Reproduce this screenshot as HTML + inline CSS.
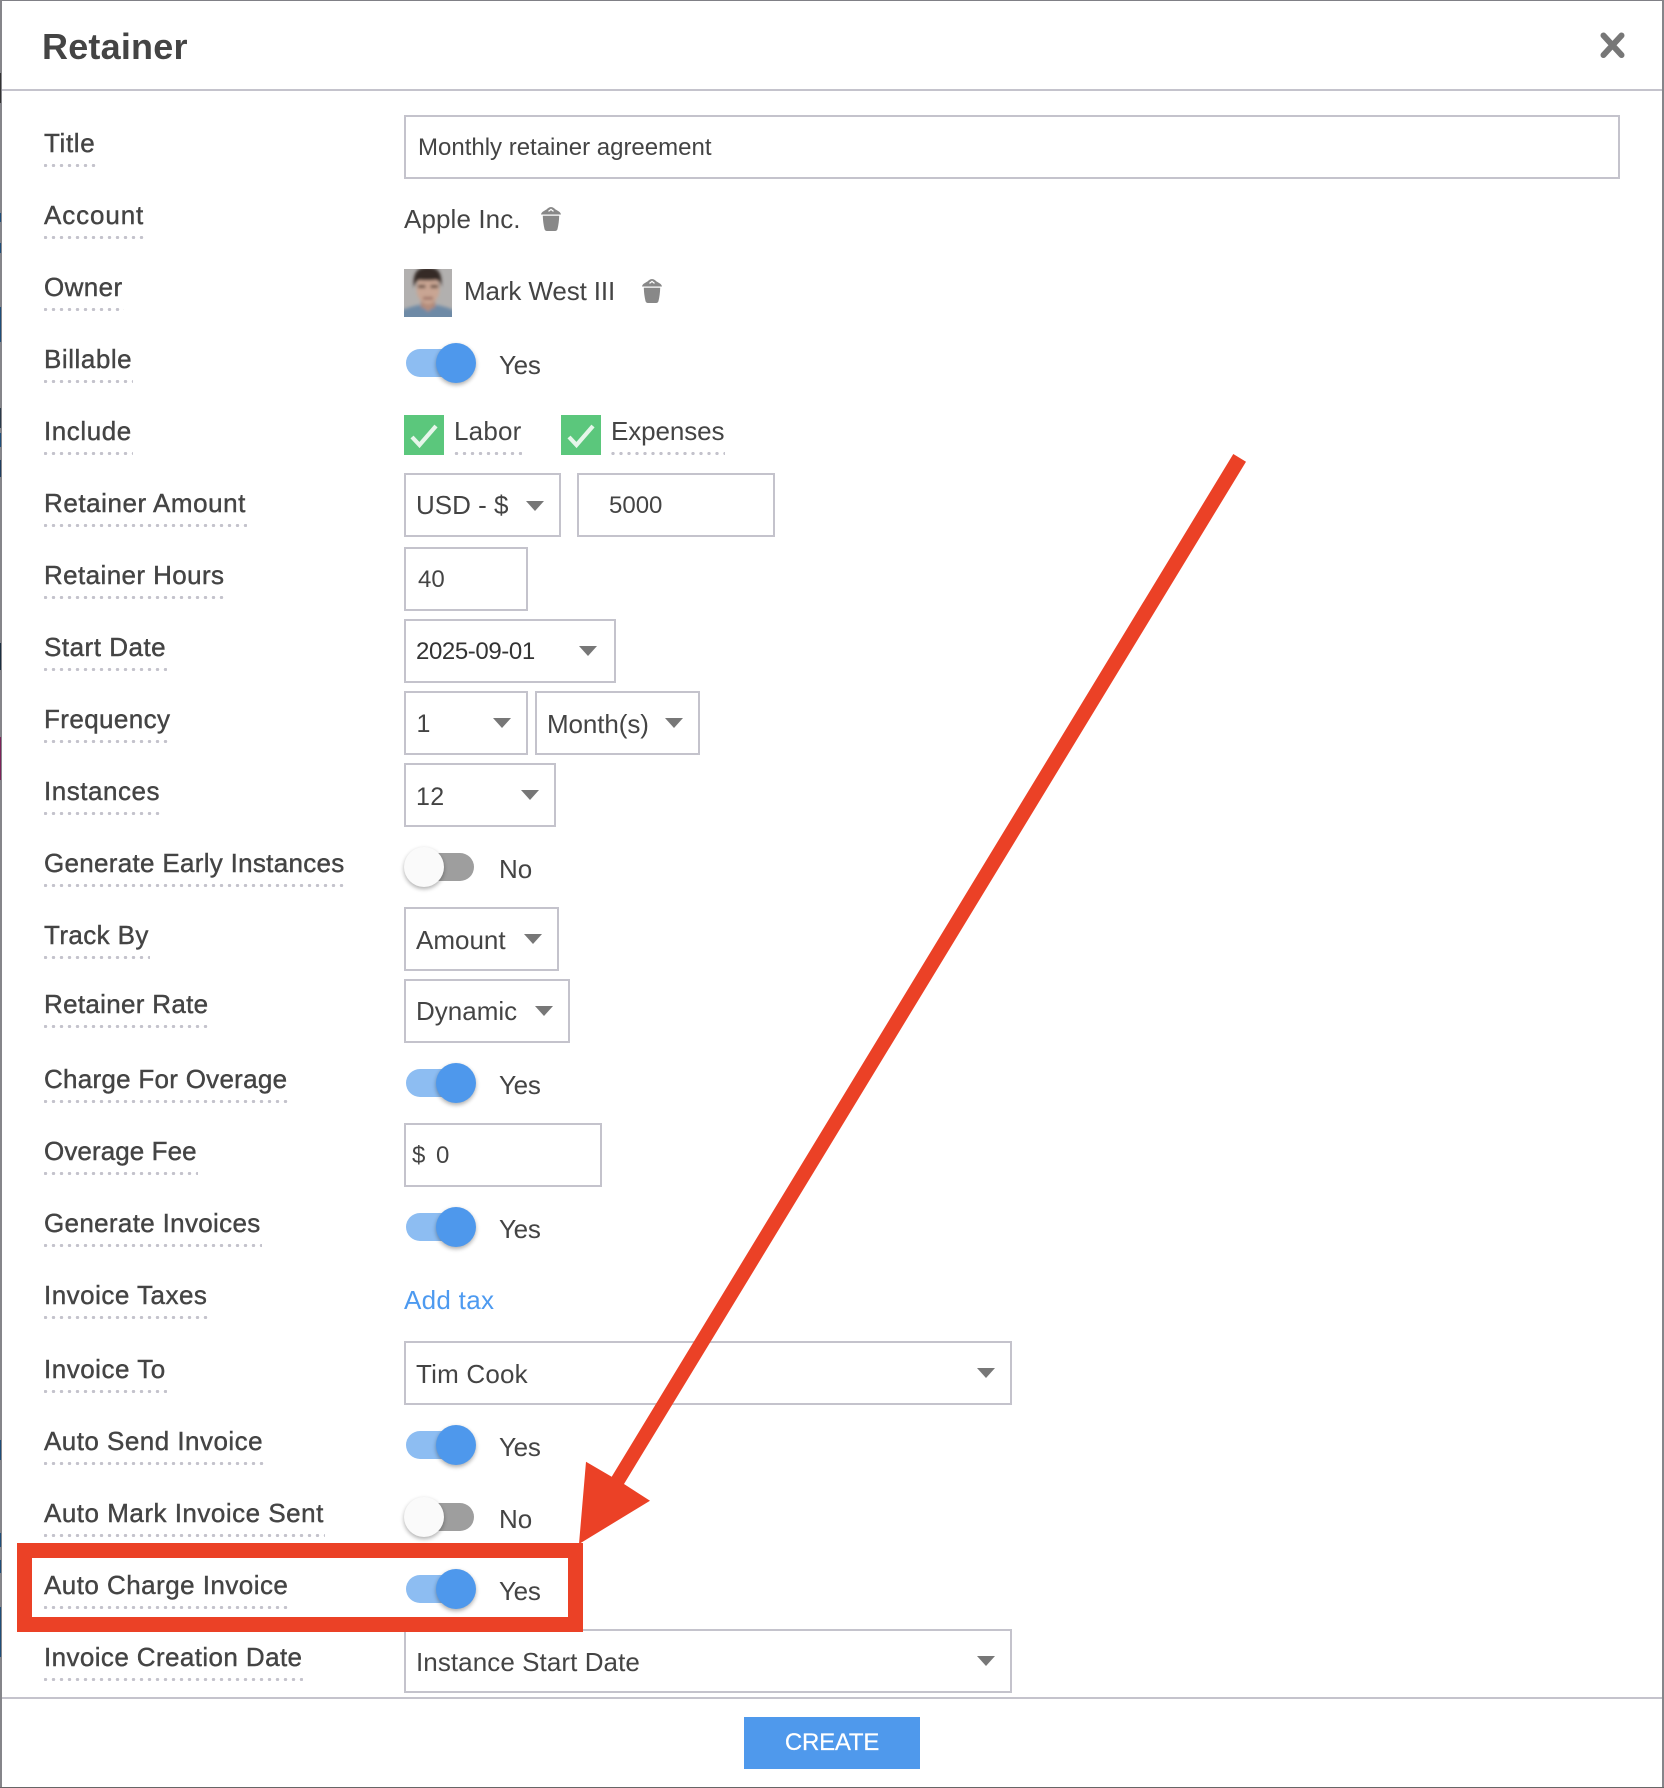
<!DOCTYPE html>
<html lang="en">
<head>
<meta charset="utf-8">
<title>Retainer</title>
<style>
html,body{margin:0;padding:0;background:#fff}
body{position:relative;width:1664px;height:1788px;overflow:hidden;font-family:"Liberation Sans",Arial,sans-serif;color:#444}
.a{position:absolute}
.t{position:absolute;font-size:26px;line-height:30px;height:30px;white-space:nowrap}
.s{font-size:24px}
.l{position:absolute;left:44px;padding-right:1px;font-size:26px;line-height:30px;height:39px;white-space:nowrap;-webkit-text-stroke:.4px #444;
background:radial-gradient(circle at 4px 1.5px,#c4c3cc 1.5px,rgba(196,195,204,0) 1.9px) -2.5px 100%/8px 3px repeat-x}
.d{position:absolute;font-size:26px;line-height:30px;height:39px;white-space:nowrap;
background:radial-gradient(circle at 4px 1.5px,#c4c3cc 1.5px,rgba(196,195,204,0) 1.9px) -2px 100%/8px 3px repeat-x}
.b{position:absolute;box-sizing:border-box;height:64px;border:2px solid #c4c3cc;background:#fff}
.c{position:absolute;width:0;height:0;border-left:9.5px solid transparent;border-right:9.5px solid transparent;border-top:10px solid #777}
.tr{position:absolute;height:28px;border-radius:14px}
.k{position:absolute;width:40px;height:40px;border-radius:50%;box-shadow:0 2px 4px rgba(0,0,0,.32)}
.on{background:#8dbdf2;left:406px;width:60px}
.onk{background:#4e98ec;left:436px}
.off{background:#9e9e9e;left:414px;width:60px}
.offk{background:#fafafa;left:404px}
</style>
</head>
<body>
<!-- frame -->
<div class="a" style="left:0;top:0;width:1664px;height:1px;background:#808086"></div>
<div class="a" style="left:0;top:0;width:2px;height:1788px;background:#85858a"></div>
<div class="a" style="left:1662px;top:0;width:2px;height:1788px;background:#85858a"></div>
<div class="a" style="left:0;top:1787px;width:1664px;height:1px;background:#666"></div>
<div class="a" style="left:0;top:73px;width:1px;height:30px;background:#333"></div>
<div class="a" style="left:0;top:213px;width:1px;height:9px;background:#1f4e79"></div>
<div class="a" style="left:0;top:243px;width:1px;height:10px;background:#1f4e79"></div>
<div class="a" style="left:0;top:307px;width:1px;height:35px;background:#1f4e79"></div>
<div class="a" style="left:0;top:408px;width:1px;height:20px;background:#2a3a4a"></div>
<div class="a" style="left:0;top:433px;width:1px;height:14px;background:#1f4e79"></div>
<div class="a" style="left:0;top:460px;width:1px;height:17px;background:#1f3e60"></div>
<div class="a" style="left:0;top:643px;width:1px;height:27px;background:#1c2f40"></div>
<div class="a" style="left:0;top:737px;width:1px;height:43px;background:#7b2459"></div>
<div class="a" style="left:0;top:1440px;width:1px;height:20px;background:#1f4e79"></div>
<div class="a" style="left:0;top:1533px;width:1px;height:14px;background:#1f4e79"></div>
<div class="a" style="left:0;top:1560px;width:1px;height:13px;background:#1f4e79"></div>
<div class="a" style="left:0;top:1607px;width:1px;height:50px;background:#1f4e79"></div>

<!-- header -->
<div class="t" style="left:42px;top:27px;font-size:36px;line-height:40px;height:40px;font-weight:bold;letter-spacing:.2px">Retainer</div>
<svg class="a" style="left:1598px;top:30px" width="30" height="30" viewBox="0 0 30 30"><path d="M5.5 5.5L23.5 25M23.5 5.5L5.5 25" stroke="#777" stroke-width="6" stroke-linecap="round" fill="none"/></svg>
<div class="a" style="left:2px;top:89px;width:1660px;height:2px;background:#c4c3cc"></div>

<!-- labels -->
<div class="l" style="top:127.5px;letter-spacing:.63px">Title</div>
<div class="l" style="top:199.5px;letter-spacing:.89px">Account</div>
<div class="l" style="top:271.5px;letter-spacing:.4px">Owner</div>
<div class="l" style="top:343.5px;letter-spacing:.54px">Billable</div>
<div class="l" style="top:415.5px;letter-spacing:.56px">Include</div>
<div class="l" style="top:487.5px;letter-spacing:.55px">Retainer Amount</div>
<div class="l" style="top:559.5px;letter-spacing:.4px">Retainer Hours</div>
<div class="l" style="top:631.5px;letter-spacing:.51px">Start Date</div>
<div class="l" style="top:703.5px;letter-spacing:.4px">Frequency</div>
<div class="l" style="top:775.5px;letter-spacing:.53px">Instances</div>
<div class="l" style="top:847.5px;letter-spacing:.3px">Generate Early Instances</div>
<div class="l" style="top:919.5px;letter-spacing:.4px">Track By</div>
<div class="l" style="top:988.5px;letter-spacing:.31px">Retainer Rate</div>
<div class="l" style="top:1063.5px;letter-spacing:.27px">Charge For Overage</div>
<div class="l" style="top:1135.5px;letter-spacing:.09px">Overage Fee</div>
<div class="l" style="top:1207.5px;letter-spacing:.33px">Generate Invoices</div>
<div class="l" style="top:1279.5px;letter-spacing:.49px">Invoice Taxes</div>
<div class="l" style="top:1353.5px;letter-spacing:.51px">Invoice To</div>
<div class="l" style="top:1425.5px;letter-spacing:.47px">Auto Send Invoice</div>
<div class="l" style="top:1497.5px;letter-spacing:.5px">Auto Mark Invoice Sent</div>
<div class="l" style="top:1569.5px;letter-spacing:.46px">Auto Charge Invoice</div>
<div class="l" style="top:1641.5px;letter-spacing:.4px">Invoice Creation Date</div>

<!-- boxes -->
<div class="b" style="left:404px;top:115px;width:1216px"></div>
<div class="t s" style="left:418px;top:133px">Monthly retainer agreement</div>

<div class="t" style="left:404px;top:204px;letter-spacing:.1px">Apple Inc.</div>
<svg class="a" style="left:541px;top:206px" width="20" height="25" viewBox="0 0 20 25"><path d="M0 8.5C0.5 5 5 4.5 6.5 2.5Q10 -0.5 13.5 2.5C15 4.5 19.5 5 20 8.5Z" fill="#888"/><path d="M7.5 5.4L10 3.4L12.5 5.4" stroke="#fff" stroke-width="1.2" fill="none"/><path d="M1.8 9.8H18.2Q18 17 16.5 23Q16 25 14 25H6Q4 25 3.5 23Q2 17 1.8 9.8Z" fill="#888"/></svg>

<svg class="a" style="left:404px;top:269px" width="48" height="48" viewBox="0 0 48 48">
<defs><filter id="bl" x="-10%" y="-10%" width="120%" height="120%"><feGaussianBlur stdDeviation="1.5"/></filter><clipPath id="cp"><rect width="48" height="48"/></clipPath></defs>
<g clip-path="url(#cp)"><rect width="48" height="48" fill="#b2b0af"/>
<g filter="url(#bl)">
<path d="M-6 56V43Q4 38 15 36L33 36Q44 38 54 43V56Z" fill="#6e8aa6"/>
<rect x="17" y="28" width="14" height="11" fill="#a98272"/>
<path d="M17 36L24 43L31 36L28 33H20Z" fill="#b58d7b"/>
<ellipse cx="24" cy="20" rx="11.5" ry="15" fill="#c9a593"/>
<path d="M10 19Q7 -2 24 -2Q40 -2 37 19Q36 11 32 11Q22 12 15 11Q12 12 10 19Z" fill="#362a25"/>
<rect x="14" y="16" width="7.5" height="3" fill="#5a4438"/><rect x="26.5" y="16" width="7.5" height="3" fill="#5a4438"/>
<rect x="19" y="28" width="10" height="2.5" fill="#966a5e"/>
</g></g></svg>
<div class="t" style="left:464px;top:276px;letter-spacing:-.12px">Mark West III</div>
<svg class="a" style="left:642px;top:278px" width="20" height="25" viewBox="0 0 20 25"><path d="M0 8.5C0.5 5 5 4.5 6.5 2.5Q10 -0.5 13.5 2.5C15 4.5 19.5 5 20 8.5Z" fill="#888"/><path d="M7.5 5.4L10 3.4L12.5 5.4" stroke="#fff" stroke-width="1.2" fill="none"/><path d="M1.8 9.8H18.2Q18 17 16.5 23Q16 25 14 25H6Q4 25 3.5 23Q2 17 1.8 9.8Z" fill="#888"/></svg>

<!-- Billable -->
<div class="tr on" style="top:349px"></div><div class="k onk" style="top:343px"></div>
<div class="t" style="left:499px;top:350px;letter-spacing:-.3px">Yes</div>

<!-- Include -->
<svg class="a" style="left:404px;top:415px" width="40" height="40" viewBox="0 0 40 40"><rect width="40" height="40" fill="#5bc77c"/><path d="M8 22L15.5 30L32 11" stroke="#e6f6ea" stroke-width="4.2" fill="none"/></svg>
<div class="d" style="left:454px;top:416px;width:68px;letter-spacing:.2px;background-position:-1.5px 100%">Labor</div>
<svg class="a" style="left:561px;top:415px" width="40" height="40" viewBox="0 0 40 40"><rect width="40" height="40" fill="#5bc77c"/><path d="M8 22L15.5 30L32 11" stroke="#e6f6ea" stroke-width="4.2" fill="none"/></svg>
<div class="d" style="left:611px;top:416px;width:114px;letter-spacing:-.1px">Expenses</div>

<!-- Retainer Amount -->
<div class="b" style="left:404px;top:473px;width:157px"></div>
<div class="t" style="left:416px;top:490px">USD - $</div><div class="c" style="left:526px;top:501px"></div>
<div class="b" style="left:577px;top:473px;width:198px"></div>
<div class="t s" style="left:609px;top:491px">5000</div>

<!-- Hours -->
<div class="b" style="left:404px;top:547px;width:124px"></div>
<div class="t s" style="left:418px;top:564.5px">40</div>

<!-- Start Date -->
<div class="b" style="left:404px;top:619px;width:212px"></div>
<div class="t s" style="left:416px;top:637px;color:#333;letter-spacing:-.4px">2025-09-01</div><div class="c" style="left:579px;top:646px"></div>

<!-- Frequency -->
<div class="b" style="left:404px;top:691px;width:124px"></div>
<div class="t" style="left:416.5px;top:709px;font-size:25px">1</div><div class="c" style="left:493px;top:718px"></div>
<div class="b" style="left:535px;top:691px;width:165px"></div>
<div class="t" style="left:547px;top:709px;letter-spacing:-.1px">Month(s)</div><div class="c" style="left:665px;top:718px"></div>

<!-- Instances -->
<div class="b" style="left:404px;top:763px;width:152px"></div>
<div class="t" style="left:416px;top:782px;font-size:25px;letter-spacing:.4px">12</div><div class="c" style="left:521px;top:790px"></div>

<!-- Early -->
<div class="tr off" style="top:853px"></div><div class="k offk" style="top:847px"></div>
<div class="t" style="left:499px;top:854px">No</div>

<!-- Track By -->
<div class="b" style="left:404px;top:907px;width:155px"></div>
<div class="t" style="left:416px;top:925px">Amount</div><div class="c" style="left:523.5px;top:934px"></div>

<!-- Rate -->
<div class="b" style="left:404px;top:979px;width:166px"></div>
<div class="t" style="left:416px;top:996px">Dynamic</div><div class="c" style="left:535px;top:1006px"></div>

<!-- Charge for Overage -->
<div class="tr on" style="top:1069px"></div><div class="k onk" style="top:1063px"></div>
<div class="t" style="left:499px;top:1070px;letter-spacing:-.3px">Yes</div>

<!-- Fee -->
<div class="b" style="left:404px;top:1123px;width:198px;height:64px"></div>
<div class="t s" style="left:412px;top:1140.5px">$</div>
<div class="t s" style="left:436px;top:1140.5px">0</div>

<!-- Gen Inv -->
<div class="tr on" style="top:1213px"></div><div class="k onk" style="top:1207px"></div>
<div class="t" style="left:499px;top:1214px;letter-spacing:-.3px">Yes</div>

<!-- Taxes -->
<div class="t" style="left:404px;top:1285px;color:#4d9af0;letter-spacing:.3px">Add tax</div>

<!-- Invoice To -->
<div class="b" style="left:404px;top:1341px;width:608px"></div>
<div class="t" style="left:416px;top:1358.5px;letter-spacing:.2px">Tim Cook</div><div class="c" style="left:977px;top:1368px"></div>

<!-- Auto Send -->
<div class="tr on" style="top:1431px"></div><div class="k onk" style="top:1425px"></div>
<div class="t" style="left:499px;top:1432px;letter-spacing:-.3px">Yes</div>

<!-- Auto mark -->
<div class="tr off" style="top:1503px"></div><div class="k offk" style="top:1497px"></div>
<div class="t" style="left:499px;top:1504px">No</div>

<!-- Auto charge -->
<div class="tr on" style="top:1575px"></div><div class="k onk" style="top:1569px"></div>
<div class="t" style="left:499px;top:1576px;letter-spacing:-.3px">Yes</div>

<!-- Creation date -->
<div class="b" style="left:404px;top:1629px;width:608px"></div>
<div class="t" style="left:416px;top:1647px;letter-spacing:.07px">Instance Start Date</div><div class="c" style="left:977px;top:1656px"></div>

<!-- footer -->
<div class="a" style="left:2px;top:1697px;width:1660px;height:2px;background:#c4c3cc"></div>
<div class="a" style="left:744px;top:1717px;width:176px;height:52px;background:#4f99ec;color:#fff;font-size:24px;line-height:52px;text-align:center;letter-spacing:-.2px;-webkit-text-stroke:.2px #fff">CREATE</div>

<!-- annotation -->
<svg class="a" style="left:0;top:0" width="1664" height="1788" viewBox="0 0 1664 1788">
<polygon points="1233.3,454 1246,461.7 624,1484 650,1500.7 579,1544 586,1461.7 611.7,1476.7" fill="#eb4126"/>
<rect x="24.5" y="1550.5" width="551" height="74" fill="none" stroke="#eb4126" stroke-width="15"/>
</svg>
</body>
</html>
